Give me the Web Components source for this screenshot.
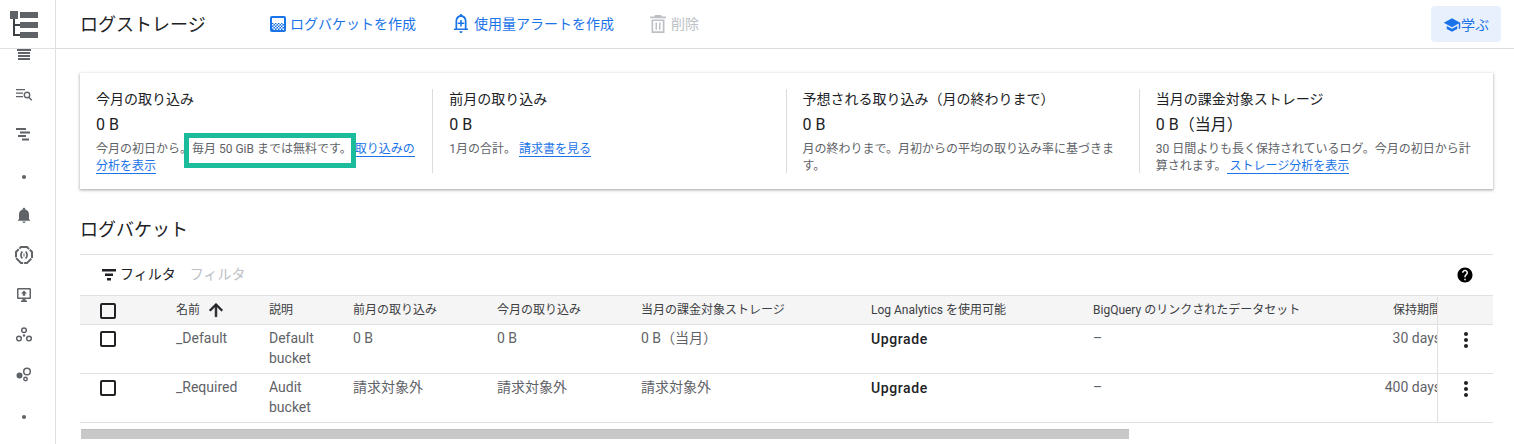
<!DOCTYPE html>
<html lang="ja">
<head>
<meta charset="utf-8">
<title>ログストレージ</title>
<style>
  html, body {
    margin: 0;
    height: 100%;
    overflow: hidden;
    background: #fff;
    font-family: Roboto, "Noto Sans CJK JP", sans-serif;
  }
</style>
</head>
<body>
<app-shell>
  <side-nav slot="nav"></side-nav>
  <page-header slot="header"></page-header>
  <usage-summary>
    <usage-stat title-text="今月の取り込み" value="0 B" marked>今月の初日から。毎月 50 GiB までは無料です。<text-link>取り込みの分析を表示</text-link></usage-stat>
    <usage-stat title-text="前月の取り込み" value="0 B">1月の合計。 <text-link>請求書を見る</text-link></usage-stat>
    <usage-stat title-text="予想される取り込み（月の終わりまで）" value="0 B">月の終わりまで。月初からの平均の取り込み率に基づきます。</usage-stat>
    <usage-stat title-text="当月の課金対象ストレージ" value="0 B（当月）">30 日間よりも長く保持されているログ。今月の初日から計算されます。<text-link>ストレージ分析を表示</text-link></usage-stat>
  </usage-summary>
  <bucket-table></bucket-table>
</app-shell>

<script>
const BLUE = "#1a73e8";

class AppShell extends HTMLElement {
  constructor() {
    super();
    this.attachShadow({ mode: "open" });
    this.shadowRoot.innerHTML = `
      <style>
        :host { display: flex; height: 444px; overflow: hidden; }
        .main { flex: 1; min-width: 0; }
        .content { padding: 24px 21px 0 24px; }
      </style>
      <slot name="nav"></slot>
      <div class="main">
        <slot name="header"></slot>
        <div class="content"><slot></slot></div>
      </div>
    `;
  }
}

class SideNav extends HTMLElement {
  constructor() {
    super();
    this.attachShadow({ mode: "open" });
    const c = "#5f6368";
    const icons = [
      `<path d="M1 2h14v2H1zM2 5h12v2H2zM2 8h12v2H2zM2 11h12v2H2z"/>`,
      `<path d="M0 2h9v1.300H0zM0 5.500h7v1.300H0zM0 9h7v1.300H0z"/><circle cx="11" cy="8" r="2.700" fill="none" stroke="${c}" stroke-width="1.400"/><path d="M12.800 10.200l3 3" stroke="${c}" stroke-width="1.500"/>`,
      `<path d="M0 1h10v2H0zM4 4.500h10v2H4zM2 8h8v2H2zM6 11.500h7v2H6z"/>`,
      `<circle cx="8" cy="10" r="2"/>`,
      `<path d="M8 16c.9 0 1.500-.6 1.500-1.400h-3C6.500 15.400 7.200 16 8 16zM13 12V7.500c0-2.600-1.300-4.600-3.700-5.100V2c0-.7-.6-1.300-1.300-1.300S6.700 1.300 6.700 2v.4C4.300 2.900 3 4.900 3 7.500V12l-1 1.200v.6h12v-.6z"/>`,
      `<path d="M5 0h6l5 5v6l-5 5H5l-5-5V5z" fill="none" stroke="${c}" stroke-width="2" stroke-dasharray="9 1"/><path d="M6.300 4.500C4.700 6.500 4.700 9.500 6.300 11.500M9.700 4.500c1.600 2 1.600 5 0 7" fill="none" stroke="${c}" stroke-width="1.700"/><path d="M7.500 6.500h1v3h-1z"/>`,
      `<path d="M2.300 1h11.400c.7 0 1.300.6 1.300 1.300v8.400c0 .7-.6 1.300-1.300 1.300H9.500v1.500H11V15H5v-1.500h1.500V12H2.300C1.600 12 1 11.400 1 10.700V2.300C1 1.600 1.600 1 2.300 1zm.2 1.500v8h11v-8zM8 3.500l3 3H9.300v2.300H6.700V6.500H5z" fill-rule="evenodd"/>`,
      `<g fill="none" stroke="${c}" stroke-width="1.500"><circle cx="8" cy="3.200" r="2.300"/><circle cx="3" cy="11.500" r="2.300"/><circle cx="13" cy="11.500" r="2.300"/></g><circle cx="8" cy="8.500" r="1.200"/>`,
      `<circle cx="3.500" cy="8.500" r="3"/><circle cx="11" cy="4.500" r="3.300" fill="none" stroke="${c}" stroke-width="1.500"/><circle cx="9.500" cy="12" r="1.700" fill="none" stroke="${c}" stroke-width="1.500"/>`,
      `<circle cx="8" cy="10" r="2"/>`,
    ];
    this.shadowRoot.innerHTML = `
      <style>
        :host {
          display: block;
          flex: none;
          width: 55px;
          height: 444px;
          border-right: 1px solid #e0e0e0;
          overflow: hidden;
        }
        .logo { height: 48px; border-bottom: 1px solid #e0e0e0; }
        .logo svg { display: block; }
        .list { height: 395px; overflow: hidden; }
        .items { margin-top: -14px; }
        .item {
          height: 40px;
          display: flex;
          align-items: center;
          justify-content: center;
          padding-right: 7px;
        }
        .item svg { fill: ${c}; overflow: visible; }
      </style>
      <div class="logo">
        <svg width="55" height="48" viewBox="0 0 55 48">
          <path d="M13 19h2v16h-2z" fill="#3c4043"/>
          <path d="M13 24h8v2h-8zM13 34h8v2h-8z" fill="#3c4043"/>
          <path d="M10 11h8v8h-8zM20 12h18v6H20zM20 22h18v6H20zM20 32h18v6H20z" fill="#5f6368"/>
        </svg>
      </div>
      <div class="list"><div class="items">
        ${icons.map((p) => `<div class="item"><svg width="16" height="16" viewBox="0 0 16 16">${p}</svg></div>`).join("")}
      </div></div>
    `;
  }
}

class PageHeader extends HTMLElement {
  constructor() {
    super();
    this.attachShadow({ mode: "open" });
    this.shadowRoot.innerHTML = `
      <style>
        :host {
          display: flex;
          align-items: center;
          height: 48px;
          border-bottom: 1px solid #dadce0;
          padding: 0 13px 0 24px;
          font-size: 14px;
        }
        h1 {
          margin: 0 63px 2px 0;
          width: 126px;
          font-size: 18px;
          font-weight: 400;
          color: #202124;
          white-space: nowrap;
        }
        .action {
          display: flex;
          align-items: center;
          color: ${BLUE};
          white-space: nowrap;
          padding-bottom: 2px;
        }
        .action svg { display: block; flex: none; margin-top: 1px; }
        .bucket { margin-right: 37px; gap: 3px; }
        .alert { margin-right: 35px; gap: 5px; }
        .delete { color: #bdc1c6; gap: 4px; }
        .learn {
          margin-left: auto;
          width: 70px;
          height: 36px;
          background: #e8f0fe;
          border-radius: 4px;
          justify-content: center;
          padding-bottom: 0;
        }
      </style>
      <h1>ログストレージ</h1>
      <div class="action bucket">
        <svg width="18" height="18" viewBox="0 0 18 18">
          <defs><pattern id="chk" width="3" height="3" patternUnits="userSpaceOnUse">
            <rect width="3" height="3" fill="${BLUE}"/><rect width="1.500" height="1.500" fill="#fff"/><rect x="1.500" y="1.500" width="1.500" height="1.500" fill="#fff"/>
          </pattern></defs>
          <rect x="1" y="1" width="16" height="16" rx="2" fill="${BLUE}"/>
          <rect x="3" y="3" width="12" height="5" fill="#fff"/>
          <rect x="3" y="8" width="12" height="7" fill="url(#chk)"/>
        </svg>
        ログバケットを作成
      </div>
      <div class="action alert">
        <svg width="16" height="20" viewBox="0 0 16 20">
          <path fill="${BLUE}" fill-rule="evenodd" d="M8 0c.8 0 1.300.6 1.400 1.300C12 2 13.500 4.100 13.500 7v7.500H15V16H1v-1.500h1.500V7c0-2.900 1.500-5 4.100-5.700C6.700.6 7.200 0 8 0zM4.200 7v7.500h7.600V7c0-2.200-1.600-4-3.800-4S4.200 4.800 4.200 7z"/>
          <path fill="${BLUE}" d="M7.200 6h1.600v2.500h2.500v1.600H8.800v2.500H7.200v-2.500H4.700V8.500h2.500zM6.300 17.200h3.400C9.500 18.300 8.800 19 8 19s-1.500-.7-1.700-1.800z"/>
        </svg>
        使用量アラートを作成
      </div>
      <div class="action delete">
        <svg width="18" height="20" viewBox="0 0 18 20">
          <path fill="#bdc1c6" fill-rule="evenodd" d="M6 1h6l1 1.500h4v1.800H1V2.500h4zM2.500 5.500h13V19h-13zM4.200 7v10.300h9.600V7z"/>
          <path fill="#bdc1c6" d="M6.500 8.500h1.500v7.300H6.500zM10 8.500h1.500v7.300H10z"/>
        </svg>
        削除
      </div>
      <div class="action learn">
        <svg width="18" height="18" viewBox="0 0 24 24"><path fill="${BLUE}" d="M5 13.180v4L12 21l7-3.820v-4L12 17l-7-3.820zM12 3L1 9l11 6 9-4.910V17h2V9L12 3z"/></svg>
        学ぶ
      </div>
    `;
  }
}

class UsageSummary extends HTMLElement {
  constructor() {
    super();
    this.attachShadow({ mode: "open" });
    this.shadowRoot.innerHTML = `
      <style>
        :host {
          display: grid;
          grid-template-columns: repeat(4, 1fr);
          padding: 16px 0;
          background: #fff;
          box-shadow: 0 1px 2px rgba(60, 64, 67, 0.3), 0 1px 3px 1px rgba(60, 64, 67, 0.15);
        }
      </style>
      <slot></slot>
    `;
  }
}

class UsageStat extends HTMLElement {
  constructor() {
    super();
    this.attachShadow({ mode: "open" });
    this.shadowRoot.innerHTML = `
      <style>
        :host {
          display: block;
          position: relative;
          padding: 0 16px;
          border-right: 1px solid #dadce0;
          height: 84px;
        }
        :host(:last-child) { border-right: none; }
        .title { font-size: 14px; line-height: 20px; color: #202124; }
        .value { font-size: 16px; line-height: 20px; margin-top: 6px; color: #202124; }
        .desc { font-size: 12px; line-height: 17px; margin-top: 6px; color: #5f6368; }
        .mark {
          position: absolute;
          left: 104px;
          top: 44px;
          width: 162px;
          height: 25px;
          border: 5px solid #1abc9c;
        }
      </style>
      <div class="title">${this.getAttribute("title-text")}</div>
      <div class="value">${this.getAttribute("value")}</div>
      <div class="desc"><slot></slot></div>
      ${this.hasAttribute("marked") ? '<div class="mark"></div>' : ""}
    `;
  }
}

class TextLink extends HTMLElement {
  constructor() {
    super();
    this.attachShadow({ mode: "open" });
    this.shadowRoot.innerHTML = `
      <style>
        :host { color: ${BLUE}; border-bottom: 1px solid ${BLUE}; }
      </style>
      <slot></slot>
    `;
  }
}

class BucketTable extends HTMLElement {
  constructor() {
    super();
    this.attachShadow({ mode: "open" });
    const rows = [
      ["_Default", "Default bucket", "0 B", "0 B", "0 B（当月）", "30 days"],
      ["_Required", "Audit bucket", "請求対象外", "請求対象外", "請求対象外", "400 days"],
    ];
    const box = `<span class="box"></span>`;
    const more = `<svg width="24" height="24" viewBox="0 0 24 24"><path fill="#202124" d="M12 8c1.100 0 2-.9 2-2s-.9-2-2-2-2 .9-2 2 .9 2 2 2zm0 2c-1.100 0-2 .9-2 2s.9 2 2 2 2-.9 2-2-.9-2-2-2zm0 6c-1.100 0-2 .9-2 2s.9 2 2 2 2-.9 2-2-.9-2-2-2z"/></svg>`;
    this.shadowRoot.innerHTML = `
      <style>
        :host { display: block; margin-top: 27px; }
        h2 {
          margin: 0;
          padding-bottom: 10px;
          font-size: 18px;
          line-height: 28px;
          font-weight: 400;
          color: #202124;
          border-bottom: 1px solid #e0e0e0;
        }
        .filter {
          display: flex;
          align-items: center;
          height: 40px;
          padding: 0 19px 4px 20px;
          box-sizing: border-box;
          font-size: 14px;
          color: #202124;
        }
        .filter .ph { margin-left: 14px; color: #bdc1c6; }
        .filter .help { margin-left: auto; display: block; margin-top: 4px; }
        .filter .icon { display: block; margin-right: 2px; margin-top: 3px; }
        .row {
          display: grid;
          grid-template-columns: 96px 93px 84px 144px 144px 230px 222px 260px 84px 56px;
          border-bottom: 1px solid #e0e0e0;
          font-size: 14px;
          line-height: 20px;
          color: #5f6368;
          height: 48px;
        }
        .row > div { padding-top: 3px; min-width: 0; }
        .desc { padding-right: 20px; }
        .head {
          height: 28px;
          background: #f5f5f5;
          border-top: 1px solid #e0e0e0;
          font-size: 12px;
          color: #3c4043;
          align-items: center;
        }
        .head > div { padding-top: 0; white-space: nowrap; }
        .head .sort { display: flex; align-items: center; gap: 6px; }
        .row .check { padding: 6px 0 0 20px; }
        .head .check { padding-top: 1px; display: flex; }
        .box {
          display: block;
          box-sizing: border-box;
          width: 16px;
          height: 16px;
          border: 2px solid #202124;
          border-radius: 2px;
        }
        .ret { overflow: hidden; text-align: right; white-space: nowrap; }
        .ret span { display: block; margin-right: -4px; }
        .row .up { color: #202124; font-weight: 500; letter-spacing: 0.6px; padding-top: 4px; }
        .act {
          border-left: 1px solid #e0e0e0;
          box-sizing: border-box;
          height: 100%;
          display: flex;
          justify-content: center;
        }
        .head .act { height: 27px; }
        .bar { height: 9px; margin: 6px 0 0 1px; width: 1048px; background: #c8c8c8; border-top: 1px solid #bdbdbd; }
      </style>
      <h2>ログバケット</h2>
      <div class="filter">
        <svg class="icon" width="18" height="14" viewBox="0 0 18 14"><path fill="#202124" d="M2 1h14v2.500H2zM5 5.500h8V8H5zM7 10h4v2.500H7z"/></svg>
        フィルタ
        <span class="ph">フィルタ</span>
        <svg class="help" width="18" height="18" viewBox="0 0 24 24"><path fill="#000" d="M12 2C6.480 2 2 6.480 2 12s4.480 10 10 10 10-4.480 10-10S17.520 2 12 2zm1 17h-2v-2h2v2zm2.070-7.750l-.9.920C13.450 12.900 13 13.500 13 15h-2v-.5c0-1.100.45-2.100 1.170-2.830l1.240-1.260c.37-.36.59-.86.59-1.410 0-1.100-.9-2-2-2s-2 .9-2 2H8c0-2.210 1.790-4 4-4s4 1.790 4 4c0 .88-.36 1.680-.93 2.250z"/></svg>
      </div>
      <div class="row head">
        <div class="check">${box}</div>
        <div class="sort">名前 <svg width="20" height="20" viewBox="0 0 24 24"><path fill="#202124" d="M4 12l1.410 1.410L11 7.830V20h2V7.830l5.580 5.590L20 12l-8-8-8 8z" stroke="#202124" stroke-width="0.8"/></svg></div>
        <div>説明</div>
        <div>前月の取り込み</div>
        <div>今月の取り込み</div>
        <div>当月の課金対象ストレージ</div>
        <div>Log Analytics を使用可能</div>
        <div>BigQuery のリンクされたデータセット</div>
        <div class="ret"><span>保持期間</span></div>
        <div class="act"></div>
      </div>
      ${rows.map((r) => `
        <div class="row">
          <div class="check">${box}</div>
          <div>${r[0]}</div>
          <div class="desc">${r[1]}</div>
          <div>${r[2]}</div>
          <div>${r[3]}</div>
          <div>${r[4]}</div>
          <div class="up">Upgrade</div>
          <div>–</div>
          <div class="ret"><span>${r[5]}</span></div>
          <div class="act">${more}</div>
        </div>
      `).join("")}
      <div class="bar"></div>
    `;
  }
}

customElements.define("app-shell", AppShell);
customElements.define("side-nav", SideNav);
customElements.define("page-header", PageHeader);
customElements.define("usage-summary", UsageSummary);
customElements.define("usage-stat", UsageStat);
customElements.define("text-link", TextLink);
customElements.define("bucket-table", BucketTable);
</script>
</body>
</html>
